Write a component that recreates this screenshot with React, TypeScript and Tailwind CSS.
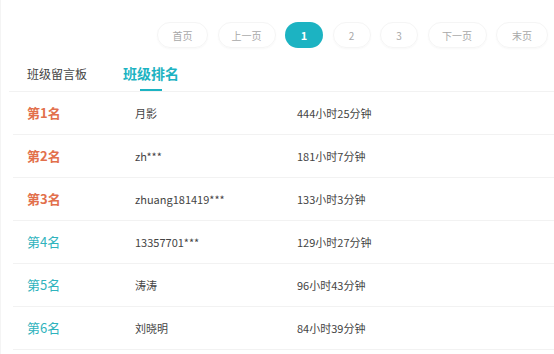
import React from "react";

const rows = [
  { rank: "第1名", name: "月影", time: "444小时25分钟", top: true },
  { rank: "第2名", name: "zh***", time: "181小时7分钟", top: true },
  { rank: "第3名", name: "zhuang181419***", time: "133小时3分钟", top: true },
  { rank: "第4名", name: "13357701***", time: "129小时27分钟", top: false },
  { rank: "第5名", name: "涛涛", time: "96小时43分钟", top: false },
  { rank: "第6名", name: "刘晓明", time: "84小时39分钟", top: false },
];

const pages = [
  { label: "首页", w: "w-[51px]" },
  { label: "上一页", w: "w-[58px]" },
  { label: "1", w: "w-[38px]", active: true },
  { label: "2", w: "w-[38px]" },
  { label: "3", w: "w-[38px]" },
  { label: "下一页", w: "w-[59px]" },
  { label: "末页", w: "w-[52px]" },
];

export default function App() {
  return (
    <div
      className="w-[554px] h-[354px] bg-white overflow-hidden border-l border-[#f4f4f4]"
      style={{ fontFamily: '"Noto Sans CJK SC", "Noto Sans", sans-serif' }}
    >
      <div className="flex justify-end gap-[9.5px] pt-[22px] pr-[6px]">
        {pages.map((p) =>
          p.active ? (
            <div
              key={p.label}
              className={`${p.w} h-[26px] rounded-full bg-[#1cb3c2] text-white text-[11px] font-bold flex items-center justify-center`}
            >
              {p.label}
            </div>
          ) : (
            <div
              key={p.label}
              className={`${p.w} h-[26px] rounded-full border border-[#f5f5f5] shadow-[0_1px_2px_rgba(0,0,0,0.03)] text-[#a8a8a8] text-[10px] flex items-center justify-center`}
            >
              {p.label}
            </div>
          )
        )}
      </div>
      <div className="flex items-end h-[44px] ml-[8px] border-b border-[#f2f2f2]">
        <div className="ml-[18px] text-[12px] text-[#444] leading-none pb-[11px]">班级留言板</div>
        <div className="ml-[36px] flex flex-col items-center">
          <div className="text-[14px] font-bold text-[#1cb3c2] leading-none">班级排名</div>
          <div className="w-[22px] h-[2px] bg-[#1cb3c2] mt-[9px]" />
        </div>
      </div>
      <div className="ml-[12px]">
        {rows.map((r) => (
          <div key={r.rank} className="flex items-center h-[43px] border-b border-[#f2f2f2]">
            <div
              className={`w-[122px] pl-[14px] text-[13px] ${
                r.top ? "text-[#e2704c] font-bold" : "text-[#2fb3bd]"
              }`}
            >
              {r.rank}
            </div>
            <div className="w-[162px] text-[11px] text-[#444]">{r.name}</div>
            <div className="text-[11px] text-[#444]">{r.time}</div>
          </div>
        ))}
      </div>
    </div>
  );
}
